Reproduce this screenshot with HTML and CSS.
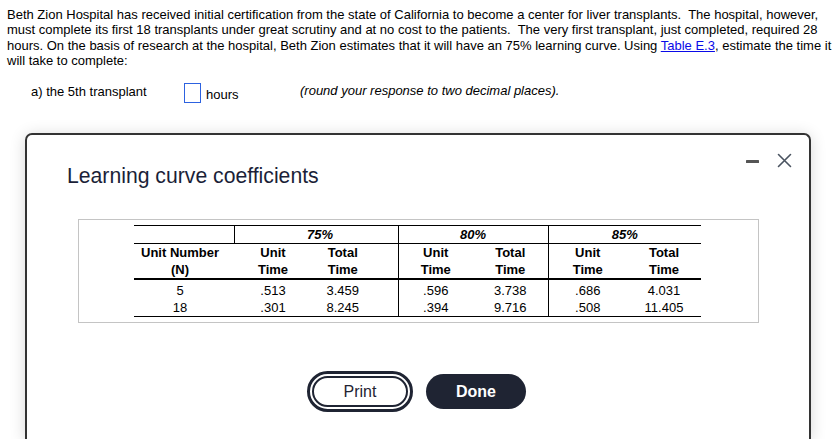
FILE: index.html
```html
<!DOCTYPE html>
<html lang="en">
<head>
<meta charset="utf-8">
<title>Learning curve coefficients</title>
<link rel="stylesheet" href="styles.css">
</head>
<body>
<div class="page">
  <p class="question">Beth Zion Hospital has received initial certification from the state of California to become a center for liver transplants.&nbsp; The hospital, however,<br>must complete its first 18 transplants under great scrutiny and at no cost to the patients.&nbsp; The very first transplant, just completed, required 28<br>hours. On the basis of research at the hospital, Beth Zion estimates that it will have an 75% learning curve. Using <a href="#" class="link">Table E.3</a>, estimate the time it<br>will take to complete:</p>
  <div class="answer-row">
    <span class="answer-label">a) the 5th transplant</span>
    <span class="answer-box"></span>
    <span class="answer-unit">hours</span>
    <span class="answer-hint">(round your response to two decimal places).</span>
  </div>
</div>

<div class="modal" role="dialog">
  <div class="modal-header">
    <h2 class="modal-title">Learning curve coefficients</h2>
    <div class="modal-icons">
      <svg class="icon-min" width="13" height="14" viewBox="0 0 13 14"><rect x="0" y="7" width="13" height="3" rx="0.5" fill="#555"/></svg>
      <svg class="icon-close" width="15" height="15" viewBox="0 0 15 15"><path d="M1.5 1.5 L13.5 13.5 M13.5 1.5 L1.5 13.5" stroke="#4a5360" stroke-width="1.6" stroke-linecap="round" fill="none"/></svg>
    </div>
  </div>
  <div class="table-box">
    <table class="lc-table">
      <colgroup>
        <col class="c-n"><col class="c-u75"><col class="c-t75"><col class="c-u80"><col class="c-t80"><col class="c-u85"><col class="c-t85">
      </colgroup>
      <tr class="row-pct">
        <th class="sep"></th>
        <th colspan="2" class="pct sep pad-75">75%</th>
        <th colspan="2" class="pct sep">80%</th>
        <th colspan="2" class="pct">85%</th>
      </tr>
      <tr class="row-head">
        <th class="cell-n">Unit Number<br>(N)</th>
        <th>Unit<br>Time</th>
        <th class="sep cell-t75">Total<br>Time</th>
        <th>Unit<br>Time</th>
        <th class="sep">Total<br>Time</th>
        <th>Unit<br>Time</th>
        <th>Total<br>Time</th>
      </tr>
      <tr class="row-data first">
        <td class="cell-n">5</td>
        <td>.513</td>
        <td class="sep cell-t75">3.459</td>
        <td>.596</td>
        <td class="sep">3.738</td>
        <td>.686</td>
        <td>4.031</td>
      </tr>
      <tr class="row-data last">
        <td class="cell-n">18</td>
        <td>.301</td>
        <td class="sep cell-t75">8.245</td>
        <td>.394</td>
        <td class="sep">9.716</td>
        <td>.508</td>
        <td>11.405</td>
      </tr>
    </table>
  </div>
  <div class="modal-actions">
    <button class="btn btn-print" type="button">Print</button>
    <button class="btn btn-done" type="button">Done</button>
  </div>
</div>
</body>
</html>
```

FILE: styles.css
```css
html, body {
  margin: 0;
  padding: 0;
  background: #ffffff;
  overflow: hidden;
}

body {
  font-family: "Liberation Sans", Arial, sans-serif;
  color: #000;
  width: 839px;
  height: 439px;
  position: relative;
}

.page {
  padding: 7px 0 0 7px;
}

.question {
  margin: 0;
  font-size: 13px;
  line-height: 15.3px;
  white-space: nowrap;
}

.link {
  color: #0a0ae8;
  text-decoration: underline;
}

.answer-row {
  display: flex;
  align-items: flex-start;
  margin-top: 15px;
  padding-left: 24px;
  font-size: 13px;
  line-height: 15px;
}

.answer-label {
  width: 153px;
  margin-top: 1px;
}

.answer-box {
  width: 17px;
  height: 20px;
  box-sizing: border-box;
  border: 1.5px solid #2d62e0;
  margin-right: 5px;
}

.answer-unit {
  width: 94px;
  margin-top: 4px;
}

.answer-hint {
  font-style: italic;
  margin-top: 0;
}

/* Modal dialog overlay */
.modal {
  position: absolute;
  left: 25px;
  top: 133px;
  width: 786px;
  height: 306px;
  box-sizing: border-box;
  background: #fff;
  border: 2px solid #333333;
  border-bottom: none;
  border-radius: 7px 7px 0 0;
  box-shadow: 0 2px 16px rgba(0, 0, 0, 0.16);
}

.modal-header {
  display: flex;
  align-items: flex-start;
  justify-content: space-between;
  padding: 18px 17px 0 40px;
}

.modal-title {
  margin: 11px 0 0 0;
  font-size: 21.2px;
  line-height: 24px;
  font-weight: normal;
  color: #1b1f38;
}

.modal-icons {
  display: flex;
  align-items: flex-start;
  gap: 18px;
}

.icon-min, .icon-close {
  display: block;
}

.table-box {
  margin: 31px 50px 0 51px;
  border: 1px solid #c4c4c4;
  padding: 5px 0 5px 55px;
}

.lc-table {
  width: 567px;
  table-layout: fixed;
  border-collapse: collapse;
  font-size: 13px;
  color: #000;
}

.c-n { width: 100px; }
.c-u75 { width: 78px; }
.c-t75 { width: 86px; }
.c-u80 { width: 75px; }
.c-t80 { width: 75px; }
.c-u85 { width: 79px; }
.c-t85 { width: 74px; }

.lc-table th, .lc-table td {
  padding: 0;
  text-align: center;
}

.lc-table .sep {
  border-right: 1px solid #000;
}

.row-pct th {
  height: 17px;
  line-height: 15px;
  border-top: 1px solid #000;
  border-bottom: 1px solid #000;
}

.pct {
  font-style: italic;
  font-weight: bold;
}

.pad-75 {
  padding-left: 8px !important;
}

.row-head th {
  height: 34px;
  line-height: 17px;
  font-weight: bold;
  border-bottom: 2px solid #000;
  padding-top: 0;
}

.row-data td {
  height: 17px;
  line-height: 17px;
}

.row-data.first td {
  padding-top: 2px;
}

.row-data.last td {
  border-bottom: 1px solid #000;
}

.lc-table .cell-n {
  padding-right: 8px;
}

.lc-table .cell-t75 {
  padding-right: 24px;
}

.modal-actions {
  display: flex;
  justify-content: center;
  align-items: center;
  gap: 18px;
  height: 41px;
  margin-top: 48px;
  padding-left: 2px;
}

.btn {
  font-family: "Liberation Sans", Arial, sans-serif;
  font-size: 16px;
  border-radius: 999px;
  box-sizing: border-box;
  padding: 0;
  cursor: pointer;
}

.btn-print {
  width: 96px;
  height: 31px;
  background: #fff;
  color: #1f2433;
  border: 2px solid #1f2433;
  outline: 3px solid #1f2433;
  outline-offset: 2px;
}

.btn-done {
  width: 100px;
  height: 35px;
  background: #1f2433;
  color: #fff;
  border: none;
  font-weight: bold;
}
```
